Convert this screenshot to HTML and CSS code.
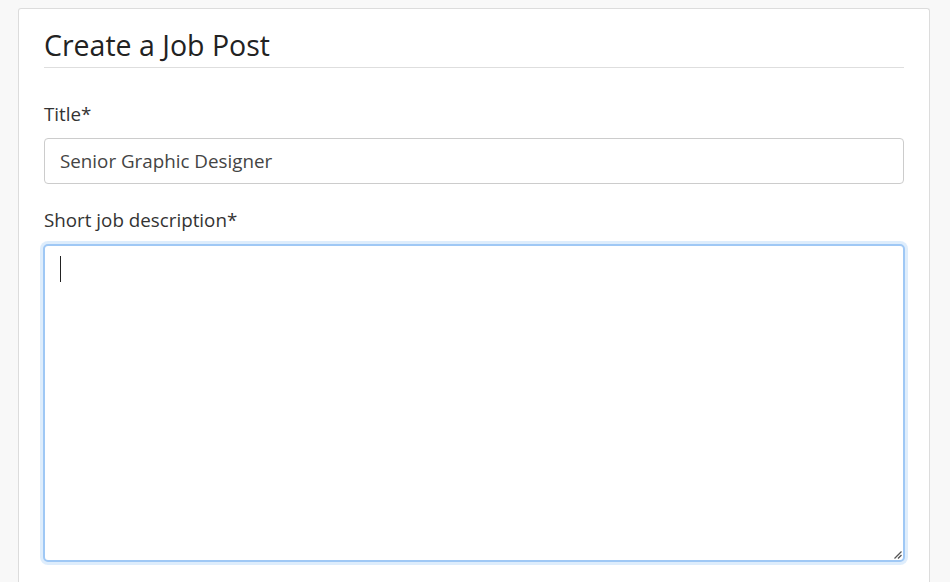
FILE: index.html
```html
<!DOCTYPE html>
<html>
<head>
<meta charset="utf-8">
<link rel="stylesheet" href="styles.css">
</head>
<body>
<div class="page">
  <div class="card">
    <h2 class="card-title">Create a Job Post</h2>
    <div class="form-group">
      <label class="label">Title*</label>
      <input class="input" type="text" value="Senior Graphic Designer">
    </div>
    <div class="form-group">
      <label class="label">Short job description*</label>
      <div class="textarea">
        <span class="caret"></span>
        <svg class="grip" width="10" height="10" viewBox="0 0 10 10"><path d="M9.5 2.5 L2.5 9.5 M9.5 6 L6 9.5" stroke="#555" stroke-width="1.3" fill="none"/></svg>
      </div>
    </div>
  </div>
</div>
</body>
</html>
```
FILE: styles.css
```css
* { box-sizing: border-box; }
html, body { margin: 0; padding: 0; height: 100%; }
body {
  background: #f8f8f8;
  font-family: "Open Sans", "Noto Sans", sans-serif;
  color: #333;
  overflow: hidden;
}
.page {
  padding: 8px 20px 0 18px;
}
.card {
  background: #fff;
  border: 1px solid #dcdcdc;
  border-bottom: none;
  border-radius: 3px 3px 0 0;
  padding: 20px 25px 40px 25px;
  height: 640px;
}
.card-title {
  margin: 0 0 32px 0;
  font-weight: 400;
  font-size: 28.5px;
  line-height: 32px;
  color: #222;
  padding-bottom: 6px;
  border-bottom: 1px solid #dedede;
}
.form-group { margin-bottom: 22px; }
.label {
  display: block;
  font-size: 18.8px;
  line-height: 27px;
  color: #333;
  padding-top: 1px;
  margin-bottom: 10px;
}
.input {
  display: block;
  width: 100%;
  height: 46px;
  border: 1px solid #ccc;
  border-radius: 4px;
  padding: 0 15px;
  font-family: inherit;
  font-size: 18.8px;
  color: #444;
  background: #fff;
  outline: none;
}
.textarea {
  position: relative;
  height: 318px;
  margin: 0 -1px;
  border: 2px solid #9fc8f5;
  border-radius: 5px;
  box-shadow: 0 0 0 3px rgba(160, 202, 247, 0.35);
  background: #fff;
}
.caret {
  position: absolute;
  left: 15px;
  top: 10px;
  width: 1px;
  height: 26px;
  background: #222;
}
.grip {
  position: absolute;
  right: 1px;
  bottom: 1px;
}
```
